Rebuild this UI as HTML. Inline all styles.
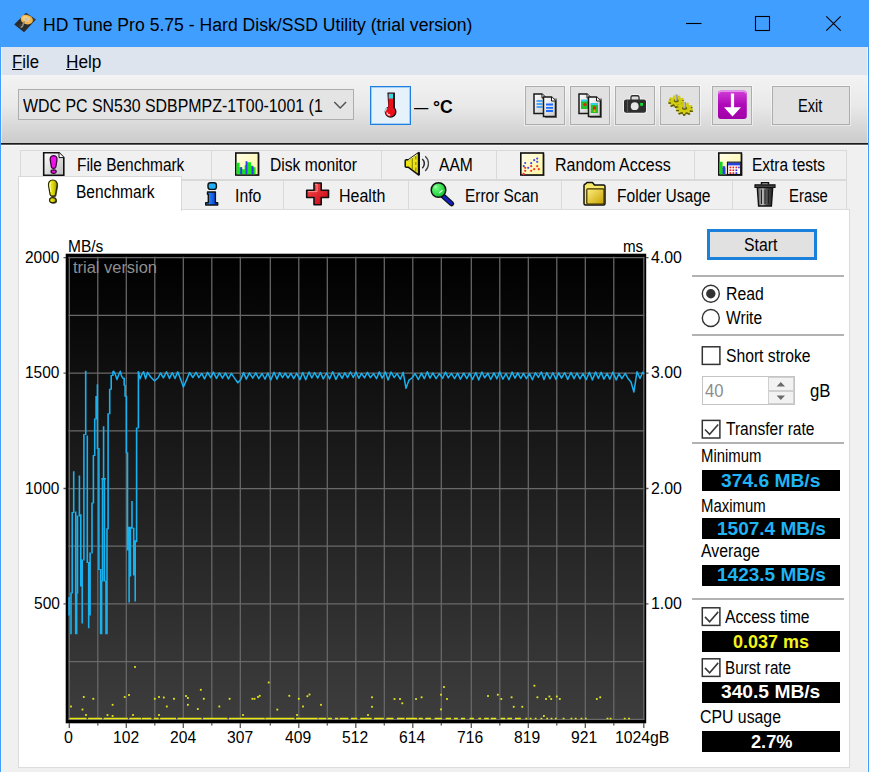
<!DOCTYPE html>
<html><head><meta charset="utf-8"><title>HD Tune Pro 5.75 - Hard Disk/SSD Utility (trial version)</title>
<style>
html,body{margin:0;padding:0}
body{width:869px;height:772px;position:relative;overflow:hidden;background:#f0f0f0;font-family:'Liberation Sans',sans-serif}
.a{position:absolute;box-sizing:border-box}
.t{position:absolute;white-space:pre;line-height:1;font-family:'Liberation Sans',sans-serif;transform-origin:0 0}
.btn{position:absolute;box-sizing:border-box;background:#e1e1e1;border:1px solid #adadad;box-shadow:0 0 0 1px rgba(255,255,255,.45)}
.tab{position:absolute;box-sizing:border-box;background:#f0f0f0;border:1px solid #d9d9d9}
.sep{position:absolute;height:2px;background:#b2b2b2;left:692px;width:152px}
.lcd{position:absolute;left:702px;width:137.6px;background:#000}
.cb{position:absolute;box-sizing:border-box;left:701.5px;width:19px;height:19px;border:1.5px solid #333;background:#fff}
svg{overflow:visible}
</style></head><body>
<!-- title bar -->
<div class="a" style="left:0;top:0;width:869px;height:47px;background:#409efe"></div>
<svg class="a" style="left:0;top:0" width="869" height="47" viewBox="0 0 869 47">
 <polygon points="26,12.8 35.9,19.5 24.1,32.2 14.2,24.6" fill="#2b2b2b"/>
 <polygon points="26,13.6 34.9,19.6 33,21.6 24.2,15.6" fill="#444"/>
 <ellipse cx="26.8" cy="19.6" rx="6.2" ry="4.7" transform="rotate(18 26.8 19.6)" fill="#f0b54c"/>
 <ellipse cx="26.2" cy="18.8" rx="4" ry="2.8" transform="rotate(18 26.2 18.8)" fill="#f7cc78"/>
 <ellipse cx="26.7" cy="19.4" rx="2" ry="1.6" fill="#c9c4c0"/>
 <polygon points="24,21 25,21.4 23,27 21,28.2 20.4,27.2" fill="#8f8b85"/>
 <polygon points="18,25.5 21,23.5 22.5,25 19.5,27.6" fill="#3a3a3a"/>
 <path d="M686 23.5H701.5" stroke="#000" stroke-width="1.1"/>
 <rect x="755.5" y="16.5" width="14" height="14" fill="none" stroke="#000" stroke-width="1.1"/>
 <path d="M826.3 16.3L840.7 30.7M840.7 16.3L826.3 30.7" stroke="#000" stroke-width="1.1"/>
</svg>
<!-- menu bar -->
<div class="a" style="left:0;top:47px;width:869px;height:28px;background:#dde4ee"></div>
<!-- toolbar -->
<div class="a" style="left:0;top:75px;width:869px;height:68px;background:linear-gradient(#f3f3f3,#e9e9e9 45%,#cbcbcb)"></div>
<div class="a" style="left:0;top:145px;width:869px;height:1px;background:#fafafa"></div>
<!-- combo -->
<div class="a" style="left:18px;top:89.3px;width:335.5px;height:30.7px;background:#e4e4e4;border:1.3px solid #adadad"></div>
<svg class="a" style="left:0;top:0" width="869" height="150" viewBox="0 0 869 150"><path d="M334.3 102L340.2 107.9L346.1 102" fill="none" stroke="#505050" stroke-width="1.4"/></svg>
<!-- thermometer button -->
<div class="a" style="left:370px;top:86px;width:41px;height:39px;background:#e5f1fb;border:1px solid #1e7fe0;box-shadow:inset 0 0 0 1px #a4cdf3"></div>
<svg class="a" style="left:0;top:0" width="869" height="150" viewBox="0 0 869 150">
 <path d="M387.400 92.600h7.400v15.200a5.500 5.500 0 0 1 1.700 4 5.800 5.800 0 0 1-11.800 0 5.500 5.500 0 0 1 3.500-5z" fill="#111"/>
 <path d="M388.700 93.600h5.200v14.500a4.800 4.800 0 0 1 1.200 3.700 4.900 4.900 0 0 1-9.900 0 4.600 4.600 0 0 1 3.100-4.300z" fill="#e8101a"/>
 <rect x="388.700" y="93.800" width="4.600" height="4.800" fill="#38d8e0"/>
 <path d="M393.900 93.200v14.900" stroke="#111" stroke-width="1.600"/>
 <path d="M385.400 111.500a4 4 0 0 1 1.600-3.200" stroke="#a0f0f0" stroke-width="1.200" fill="none"/>
 <path d="M387 112.500a3 3 0 0 0 3.200 2.500" stroke="#ffd8d8" stroke-width="1.400" fill="none"/>
</svg>
<!-- toolbar buttons -->
<div class="btn" style="left:525px;top:86.2px;width:40px;height:38.6px"></div>
<div class="btn" style="left:570px;top:86.2px;width:40px;height:38.6px"></div>
<div class="btn" style="left:615px;top:86.2px;width:40px;height:38.6px"></div>
<div class="btn" style="left:660px;top:86.2px;width:40px;height:38.6px"></div>
<div class="btn" style="left:712px;top:86.2px;width:40px;height:38.6px"></div>
<div class="btn" style="left:772px;top:86.2px;width:78px;height:38.6px"></div>
<svg class="a" style="left:0;top:0" width="869" height="150" viewBox="0 0 869 150">
 <defs>
  <linearGradient id="pg" x1="0" y1="0" x2="1" y2="1"><stop offset="0" stop-color="#fff"/><stop offset="1" stop-color="#c8c8c8"/></linearGradient>
  <linearGradient id="pu" x1="0" y1="0" x2="0" y2="1"><stop offset="0" stop-color="#d040d8"/><stop offset=".5" stop-color="#b008b8"/><stop offset="1" stop-color="#a000a8"/></linearGradient>
  <g id="page"><path d="M0 0h8l4 4v15.5h-12z" fill="url(#pg)" stroke="#1a1a1a" stroke-width="1.5"/><path d="M8 0v4h4" fill="#fff" stroke="#1a1a1a" stroke-width="1"/></g>
 </defs>
 <!-- copy text -->
 <g transform="translate(534,94)"><use href="#page"/><path d="M2.5 7h6M2.5 10h6M2.5 13h6" stroke="#1e90ff" stroke-width="1.7"/></g>
 <g transform="translate(543.5,97)"><rect x="1.5" y="1.5" width="12" height="19.5" fill="#222" opacity=".55"/><use href="#page"/><path d="M2.5 7.5h7M2.5 10.8h7M2.5 14h7" stroke="#1e6cff" stroke-width="1.8"/></g>
 <!-- copy image -->
 <g transform="translate(579,94)"><use href="#page"/><rect x="2" y="6" width="7" height="9" fill="#28c028"/><rect x="2" y="5.5" width="7" height="2" fill="#30d0e8"/><circle cx="6" cy="10.5" r="1.6" fill="#e02010"/></g>
 <g transform="translate(588.5,97)"><rect x="1.5" y="1.5" width="12" height="19.5" fill="#222" opacity=".55"/><use href="#page"/><rect x="2.2" y="6.5" width="7.3" height="9.5" fill="#28c028"/><rect x="2.2" y="6" width="7.3" height="2" fill="#30d0e8"/><circle cx="6" cy="11" r="1.7" fill="#e02010"/><path d="M5 15l1-3 1 3z" fill="#e8c020"/></g>
 <!-- camera -->
 <g>
  <path d="M624 101.5a2 2 0 0 1 2-2h4.3v-2.2a2.2 2.2 0 0 1 2.2-2.2h5a2.2 2.2 0 0 1 2.2 2.2v2.2h4.3a2 2 0 0 1 2 2v9.3a2 2 0 0 1-2 2h-18a2 2 0 0 1-2-2z" fill="#2e2e2e" stroke="#fafafa" stroke-width="1.6" paint-order="stroke"/>
  <path d="M631.6 99.5v-1.7a1.2 1.2 0 0 1 1.2-1.2h4.4a1.2 1.2 0 0 1 1.2 1.2v1.7z" fill="#dcdcdc"/>
  <path d="M627.5 100v13" stroke="#555" stroke-width="1.2"/>
  <circle cx="634.7" cy="106.2" r="3.9" fill="#e6e6e6"/>
  <rect x="640.2" y="103" width="2.8" height="2.8" fill="#10e030"/>
 </g>
 <!-- gears -->
 <path d="M6.00 0.00 L8.14 1.03 L7.71 2.80 L5.34 2.74 L4.60 3.86 L5.57 6.02 L4.10 7.10 L2.33 5.53 L1.04 5.91 L0.40 8.19 L-1.42 8.08 L-1.77 5.73 L-3.00 5.20 L-4.96 6.53 L-6.28 5.27 L-5.04 3.25 L-5.64 2.05 L-8.00 1.82 L-8.20 0.00 L-5.95 -0.75 L-5.64 -2.05 L-7.29 -3.75 L-6.28 -5.27 L-4.08 -4.40 L-3.00 -5.20 L-3.18 -7.56 L-1.42 -8.08 L-0.29 -5.99 L1.04 -5.91 L2.42 -7.83 L4.10 -7.10 L3.63 -4.78 L4.60 -3.86 L6.89 -4.44 L7.71 -2.80 L5.85 -1.33Z" transform="translate(676.3,102.6) scale(1,.68)" fill="#5e5a00"/>
 <path d="M6.00 0.00 L8.14 1.03 L7.71 2.80 L5.34 2.74 L4.60 3.86 L5.57 6.02 L4.10 7.10 L2.33 5.53 L1.04 5.91 L0.40 8.19 L-1.42 8.08 L-1.77 5.73 L-3.00 5.20 L-4.96 6.53 L-6.28 5.27 L-5.04 3.25 L-5.64 2.05 L-8.00 1.82 L-8.20 0.00 L-5.95 -0.75 L-5.64 -2.05 L-7.29 -3.75 L-6.28 -5.27 L-4.08 -4.40 L-3.00 -5.20 L-3.18 -7.56 L-1.42 -8.08 L-0.29 -5.99 L1.04 -5.91 L2.42 -7.83 L4.10 -7.10 L3.63 -4.78 L4.60 -3.86 L6.89 -4.44 L7.71 -2.80 L5.85 -1.33Z" transform="translate(676.3,100.8) scale(1,.68)" fill="#d2cc12"/>
 <ellipse cx="676.3" cy="100.8" rx="2.6" ry="1.7" fill="#6a6600"/>
 <path d="M676.4 94.6v6.4" stroke="#8c8c8c" stroke-width="2.4"/><path d="M675.8 94.8v6" stroke="#e0e0e0" stroke-width=".9"/>
 <path d="M6.00 0.00 L8.14 1.03 L7.71 2.80 L5.34 2.74 L4.60 3.86 L5.57 6.02 L4.10 7.10 L2.33 5.53 L1.04 5.91 L0.40 8.19 L-1.42 8.08 L-1.77 5.73 L-3.00 5.20 L-4.96 6.53 L-6.28 5.27 L-5.04 3.25 L-5.64 2.05 L-8.00 1.82 L-8.20 0.00 L-5.95 -0.75 L-5.64 -2.05 L-7.29 -3.75 L-6.28 -5.27 L-4.08 -4.40 L-3.00 -5.20 L-3.18 -7.56 L-1.42 -8.08 L-0.29 -5.99 L1.04 -5.91 L2.42 -7.83 L4.10 -7.10 L3.63 -4.78 L4.60 -3.86 L6.89 -4.44 L7.71 -2.80 L5.85 -1.33Z" transform="translate(684.6,110) scale(1.06,.72)" fill="#5e5a00"/>
 <path d="M6.00 0.00 L8.14 1.03 L7.71 2.80 L5.34 2.74 L4.60 3.86 L5.57 6.02 L4.10 7.10 L2.33 5.53 L1.04 5.91 L0.40 8.19 L-1.42 8.08 L-1.77 5.73 L-3.00 5.20 L-4.96 6.53 L-6.28 5.27 L-5.04 3.25 L-5.64 2.05 L-8.00 1.82 L-8.20 0.00 L-5.95 -0.75 L-5.64 -2.05 L-7.29 -3.75 L-6.28 -5.27 L-4.08 -4.40 L-3.00 -5.20 L-3.18 -7.56 L-1.42 -8.08 L-0.29 -5.99 L1.04 -5.91 L2.42 -7.83 L4.10 -7.10 L3.63 -4.78 L4.60 -3.86 L6.89 -4.44 L7.71 -2.80 L5.85 -1.33Z" transform="translate(684.6,108.2) scale(1.06,.72)" fill="#d2cc12"/>
 <ellipse cx="684.6" cy="108.2" rx="2.7" ry="1.8" fill="#6a6600"/>
 <path d="M684.7 102v6.400" stroke="#8c8c8c" stroke-width="2.400"/><path d="M684.100 102.200v6" stroke="#e0e0e0" stroke-width=".9"/>
 <!-- purple arrow -->
 <rect x="718" y="90.5" width="28.8" height="28.4" rx="3" fill="url(#pu)"/>
 <path d="M718.8 93.5a2.3 2.3 0 0 1 2.3-2.2h22.6a2.3 2.3 0 0 1 2.3 2.2" fill="none" stroke="#e890ee" stroke-width="1.2"/>
 <path d="M730.900 93.500h3.200v13.700h6.900l-8.500 9.300-8.500-9.300h6.900z" fill="#fff"/>
</svg>
<!-- tab control -->
<div class="tab" style="left:19.8px;top:149.6px;width:192px;height:30.5px"></div>
<div class="tab" style="left:210.8px;top:149.6px;width:171px;height:30.5px"></div>
<div class="tab" style="left:380.8px;top:149.6px;width:116px;height:30.5px"></div>
<div class="tab" style="left:495.8px;top:149.6px;width:199px;height:30.5px"></div>
<div class="tab" style="left:693.8px;top:149.6px;width:153px;height:30.5px"></div>
<div class="tab" style="left:179.3px;top:179.6px;width:104.5px;height:30.5px"></div>
<div class="tab" style="left:282.8px;top:179.6px;width:126px;height:30.5px"></div>
<div class="tab" style="left:407.8px;top:179.6px;width:154px;height:30.5px"></div>
<div class="tab" style="left:560.8px;top:179.6px;width:172px;height:30.5px"></div>
<div class="tab" style="left:731.8px;top:179.6px;width:115px;height:30.5px"></div>
<!-- tab page -->
<div class="a" style="left:18px;top:209.2px;width:831.5px;height:559px;background:#fff;border:1px solid #dcdcdc"></div>
<!-- selected tab -->
<div class="a" style="left:18px;top:176.4px;width:164.3px;height:34.5px;background:#fff;border:1px solid #d9d9d9;border-bottom:none"></div>
<svg class="a" style="left:0;top:0" width="869" height="215" viewBox="0 0 869 215">
 <defs>
  <linearGradient id="ly" x1="0" y1="0" x2="1" y2="1"><stop offset="0" stop-color="#ffffe8"/><stop offset="1" stop-color="#fff6a0"/></linearGradient>
  <linearGradient id="lg" x1="0" y1="0" x2="1" y2="1"><stop offset="0" stop-color="#fff"/><stop offset="1" stop-color="#bdbdbd"/></linearGradient>
  <linearGradient id="lr" x1="0" y1="0" x2="1" y2="1"><stop offset="0" stop-color="#f85050"/><stop offset="1" stop-color="#c80010"/></linearGradient>
  <linearGradient id="lb" x1="0" y1="0" x2="1" y2="0"><stop offset="0" stop-color="#30a0ff"/><stop offset="1" stop-color="#0030d0"/></linearGradient>
  <linearGradient id="lf" x1="0" y1="0" x2="1" y2="1"><stop offset="0" stop-color="#fff080"/><stop offset="1" stop-color="#c8a000"/></linearGradient>
  <linearGradient id="lt" x1="0" y1="0" x2="1" y2="0"><stop offset="0" stop-color="#555"/><stop offset=".35" stop-color="#c0c0c0"/><stop offset=".6" stop-color="#555"/><stop offset="1" stop-color="#222"/></linearGradient>
  <linearGradient id="lyy" x1="0" y1="0" x2="1" y2="0"><stop offset="0" stop-color="#f4f018"/><stop offset=".55" stop-color="#dcd808"/><stop offset="1" stop-color="#989400"/></linearGradient>
  <radialGradient id="lgn" cx=".35" cy=".35" r=".7"><stop offset="0" stop-color="#70ff80"/><stop offset="1" stop-color="#10c030"/></radialGradient>
 </defs>
 <!-- File Benchmark: page + magenta ! -->
 <path d="M43.7 152.8h15.3l4.8 4.8v17.6h-20.1z" fill="url(#lg)" stroke="#111" stroke-width="1.6"/>
 <path d="M59 152.8v4.8h4.8" fill="#fff" stroke="#111" stroke-width="1"/>
 <path d="M53.6 155.6c2.6 0 3.6 2 3.4 4.2l-1.2 7.4c-.3 1.6-4.1 1.6-4.4 0l-1.2-7.4c-.2-2.2.8-4.2 3.4-4.2z" fill="#f010e8" stroke="#300030" stroke-width="1.200"/>
 <ellipse cx="53.6" cy="171.6" rx="2.6" ry="1.8" fill="#f010e8" stroke="#300030" stroke-width="1.200"/>
 <!-- Disk monitor -->
 <rect x="237" y="154" width="22.5" height="22" fill="#222" opacity=".5"/>
 <rect x="235.8" y="153" width="22.6" height="22" fill="url(#ly)" stroke="#111" stroke-width="1.6"/>
 <path d="M236.6 174.2v-11.5h3v4.5h2.5v2h2.5v-4h2v-3h4.5v3.5h2v1.5h2.5v7z" fill="#10e818"/>
 <path d="M240.2 174.2v-7h2v7zM245.6 174.2v-13h1.8v13zM251.6 174.2v-8h2v8z" fill="#3838f0"/>
 <!-- AAM speaker -->
 <path d="M405.200 160.800a1 1 0 0 1 1-1h2.300l10.300-7.300v22.600l-10.300-7.800h-2.300a1 1 0 0 1-1-1z" fill="#ece414" stroke="#111" stroke-width="1.500" stroke-linejoin="round"/>
 <path d="M418.900 152.500v22.600" stroke="#111" stroke-width="2.200"/>
 <path d="M412.300 158v11M415.800 155.500v4M415.800 162v3M415.800 167.500v4" stroke="#8a8400" stroke-width="1.100"/>
 <path d="M408.300 160.500l9-6.300" stroke="#ffffa0" stroke-width="1"/>
 <path d="M422.300 159a6.200 6.200 0 0 1 0 9.200" fill="none" stroke="#222" stroke-width="1.500"/>
 <path d="M425.200 156.300a9.800 9.800 0 0 1 0 14.600" fill="none" stroke="#444" stroke-width="1.300"/>
 <!-- Random access -->
 <rect x="522" y="154" width="22.5" height="22" fill="#222" opacity=".5"/>
 <rect x="520.8" y="153" width="22.6" height="22" fill="url(#ly)" stroke="#111" stroke-width="1.6"/>
 <g fill="#4848f8"><circle cx="525.2" cy="163" r="1.1"/><circle cx="523.8" cy="166.2" r="1.1"/><circle cx="528.2" cy="167.8" r="1.1"/><circle cx="531.2" cy="163.2" r="1.1"/><circle cx="534.2" cy="160.2" r="1.1"/><circle cx="537.2" cy="158.6" r="1.1"/><circle cx="537.2" cy="161.8" r="1.1"/></g>
 <g fill="#f83030"><circle cx="523.6" cy="174" r="1.2"/><circle cx="525.2" cy="170.8" r="1.1"/><circle cx="525.2" cy="167.8" r="1.1"/><circle cx="531.2" cy="170.8" r="1.1"/><circle cx="531.2" cy="166.2" r="1.1"/><circle cx="534.2" cy="169.2" r="1.1"/><circle cx="537.2" cy="166.2" r="1.1"/><circle cx="538.8" cy="169.2" r="1.1"/></g>
 <!-- Extra tests -->
 <rect x="720" y="154" width="22.5" height="22" fill="#222" opacity=".5"/>
 <rect x="718.8" y="153" width="22.6" height="22" fill="url(#ly)" stroke="#111" stroke-width="1.6"/>
 <path d="M719.6 174.2v-12.5h3v6h3v6.5z" fill="#10d818"/><path d="M722.6 174.2v-8h2.6v8z" fill="#3838f0"/>
 <rect x="727.5" y="162.2" width="13.2" height="12.3" fill="#fff" stroke="#111" stroke-width="1.2"/>
 <rect x="728.1" y="162.8" width="12" height="2.6" fill="#2840e0"/>
 <g fill="#f02020"><rect x="729.5" y="166.6" width="1.7" height="1.7"/><rect x="732.5" y="166.6" width="1.7" height="1.7"/><rect x="735.5" y="166.6" width="1.7" height="1.7"/><rect x="729.5" y="169.4" width="1.7" height="1.7"/><rect x="732.5" y="169.4" width="1.7" height="1.7"/><rect x="729.5" y="172.2" width="1.7" height="1.7"/><rect x="732.5" y="172.2" width="1.7" height="1.7"/></g>
 <g fill="#2030f0"><rect x="735.5" y="169.4" width="1.7" height="1.7"/><rect x="735.5" y="172.2" width="1.7" height="1.7"/><rect x="738.2" y="166.6" width="1.5" height="1.7"/></g>
 <!-- Benchmark yellow ! -->
 <path d="M53.600 180.800c3.400 0 4.800 2.500 4.500 5.600l-1.700 9.400c-.4 2.100-5.200 2.100-5.600 0l-1.700-9.400c-.3-3.100 1.100-5.600 4.500-5.600z" fill="#222" opacity=".75"/>
 <ellipse cx="53.600" cy="201" rx="3.500" ry="2.700" fill="#222" opacity=".75"/>
 <path d="M52.800 180c3.200 0 4.600 2.400 4.300 5.400l-1.600 9.200c-.4 2-5 2-5.400 0l-1.600-9.200c-.3-3 1.100-5.400 4.300-5.400z" fill="url(#lyy)" stroke="#2a2800" stroke-width="1.200"/>
 <path d="M51.300 182.300c-1.200.8-1.500 2-1.300 3.500l1 6" fill="none" stroke="#ffffa0" stroke-width="1.100"/>
 <ellipse cx="52.800" cy="200.200" rx="3.300" ry="2.500" fill="url(#lyy)" stroke="#2a2800" stroke-width="1.200"/>
 <!-- Info i -->
 <rect x="208" y="182.800" width="8.400" height="6.600" rx="2.400" fill="#20b0f8" stroke="#111" stroke-width="1.400"/>
 <path d="M207.5 192h7.900v10.700h2.300v2.300h-12v-2.300h2.600v-8.400h-0.800z" fill="url(#lb)" stroke="#111" stroke-width="1.400" stroke-linejoin="round"/>
 <!-- Health cross -->
 <path d="M314 183h7.200v7.300h7.300v7.200h-7.300v7.300h-7.200v-7.300h-7.300v-7.200h7.300z" fill="url(#lr)" stroke="#111" stroke-width="1.600" stroke-linejoin="round"/>
 <path d="M315 184.300h2v7.300h-9" fill="none" stroke="#ff9090" stroke-width="1"/>
 <!-- Error scan magnifier -->
 <path d="M442.500 195.500l9 8.200" stroke="#111" stroke-width="5.200" stroke-linecap="round"/>
 <path d="M443 196l8.300 7.500" stroke="#1020c8" stroke-width="3" stroke-linecap="round"/>
 <circle cx="438.500" cy="190" r="7.300" fill="url(#lgn)" stroke="#111" stroke-width="1.500"/>
 <path d="M434.500 187.500l2-1.500M439 193l3.500-2.800" stroke="#d8ffd8" stroke-width="1.100"/>
 <!-- Folder -->
 <path d="M584 185.500a1.500 1.500 0 0 1 1.500-1.500l1.500-1.500h5.500l2 2.500h9a1.500 1.500 0 0 1 1.500 1.500v17a1.500 1.500 0 0 1-1.500 1.500h-18a1.500 1.500 0 0 1-1.500-1.500z" fill="#f8e868" stroke="#111" stroke-width="1.500" stroke-linejoin="round"/>
 <rect x="586.800" y="188.800" width="17.200" height="15.200" rx="1" fill="url(#lf)" stroke="#3a3000" stroke-width="1.200"/>
 <!-- Erase trash -->
 <path d="M757.300 187.500h15.400l-1.300 18.500h-12.800z" fill="url(#lt)" stroke="#111" stroke-width="1.400"/>
 <path d="M761.500 189.500v14.500M765 189.500v14.500M768.500 189.500v14.500" stroke="#222" stroke-width="1.100"/>
 <path d="M755 184.800h20v2.700h-20z" fill="#444" stroke="#111" stroke-width="1.200"/>
 <path d="M761.500 184.500v-1.700h7v1.700" fill="none" stroke="#111" stroke-width="1.500"/>
</svg>
<svg id="chart" style="position:absolute;left:0;top:0" width="869" height="772" viewBox="0 0 869 772">
<defs><linearGradient id="cg" x1="0" y1="0" x2="0" y2="1"><stop offset="0" stop-color="#000"/><stop offset="1" stop-color="#3d3d3d"/></linearGradient></defs>
<rect x="65.7" y="253.7" width="580.5" height="469.59999999999997" fill="#000"/>
<rect x="68.3" y="256.7" width="576.0" height="463.09999999999997" fill="url(#cg)"/>
<path d="M69.30 256.7 V720.0999999999999 M97.80 256.7 V720.0999999999999 M126.30 256.7 V720.0999999999999 M154.80 256.7 V720.0999999999999 M183.30 256.7 V720.0999999999999 M211.80 256.7 V720.0999999999999 M240.30 256.7 V720.0999999999999 M270.30 256.7 V720.0999999999999 M298.80 256.7 V720.0999999999999 M327.30 256.7 V720.0999999999999 M355.80 256.7 V720.0999999999999 M384.30 256.7 V720.0999999999999 M412.80 256.7 V720.0999999999999 M441.30 256.7 V720.0999999999999 M471.30 256.7 V720.0999999999999 M499.80 256.7 V720.0999999999999 M528.30 256.7 V720.0999999999999 M556.80 256.7 V720.0999999999999 M585.30 256.7 V720.0999999999999 M613.80 256.7 V720.0999999999999 M643.80 256.7 V720.0999999999999 M68.3 257.70 H644.5999999999999 M68.3 315.40 H644.5999999999999 M68.3 373.10 H644.5999999999999 M68.3 430.80 H644.5999999999999 M68.3 488.50 H644.5999999999999 M68.3 546.20 H644.5999999999999 M68.3 603.90 H644.5999999999999 M68.3 661.60 H644.5999999999999 M68.3 719.30 H644.5999999999999" stroke="#696969" stroke-width="1.25" fill="none"/>
<path d="M63.5 257.70 H66 M646 257.70 H648.5 M63.5 373.10 H66 M646 373.10 H648.5 M63.5 488.50 H66 M646 488.50 H648.5 M63.5 603.90 H66 M646 603.90 H648.5 M69.30 723 V728 M97.80 723 V725.5 M126.30 723 V728 M154.80 723 V725.5 M183.30 723 V728 M211.80 723 V725.5 M240.30 723 V728 M270.30 723 V725.5 M298.80 723 V728 M327.30 723 V725.5 M355.80 723 V728 M384.30 723 V725.5 M412.80 723 V728 M441.30 723 V725.5 M471.30 723 V728 M499.80 723 V725.5 M528.30 723 V728 M556.80 723 V725.5 M585.30 723 V728 M613.80 723 V725.5 M643.80 723 V728" stroke="#555" stroke-width="1.3" fill="none"/>
<path d="M69.1 597.0V615.5 M71.0 592.5V634.2 M72.2 511.9V593.5 M73.7 471.2V512.9 M75.7 511.5V634.2 M76.7 592.5V634.2 M77.5 515.5V593.5 M79.4 475.5V516.5 M80.8 514.3V586.5 M82.2 559.5V623.5 M83.9 434.0V560.5 M85.7 370.7V435.0 M87.3 435.5V563.1 M88.7 562.1V628.3 M90.1 552.5V615.5 M92.0 502.5V553.5 M93.4 455.0V503.5 M94.7 418.5V456.0 M96.1 396.0V419.5 M97.4 384.3V449.0 M98.9 448.0V570.1 M100.6 569.1V634.2 M101.6 580.5V634.2 M102.5 479.3V581.5 M103.6 426.3V480.3 M104.4 479.3V581.5 M106.0 580.5V634.2 M107.0 528.3V634.2 M108.1 413.3V529.3 M109.7 388.7V414.3 M111.2 375.1V389.7 M112.9 371.2V376.1 M124.2 377.7V385.8 M125.1 384.8V396.8 M126.4 395.8V453.2 M127.5 452.2V550.5 M129.1 526.8V602.4 M130.4 526.8V576.5 M132.0 500.9V528.8 M133.7 527.8V575.5 M135.2 540.3V601.4 M136.6 427.5V542.3 M138.4 371.2V428.5 M101.3 478.8H106" fill="none" stroke="#19b0ee" stroke-width="1.6"/>
<polyline points="112.9,371.7 113.8,371.3 115.5,375.0 117.0,379.5 118.6,375.0 120.3,371.3 121.6,376.2 122.9,378.2 124.2,378.6" fill="none" stroke="#19b0ee" stroke-width="1.5" stroke-linejoin="round"/>
<polyline points="138.4,371.7 140.1,378.8 141.9,374.3 143.6,371.7 145.6,378.8 147.6,372.3 150.7,377.0 154.4,380.8 158.0,378.0 160.5,373.0 163.4,377.8 166.5,371.8 169.5,378.4 172.2,372.7 175.0,378.5 177.7,371.9 180.7,379.5 183.4,387.0 186.5,379.9 189.6,372.5 192.8,377.5 196.1,372.3 198.8,377.7 201.7,373.3 204.5,378.9 207.6,372.4 210.7,377.6 213.4,372.1 216.5,378.5 219.4,372.8 222.4,378.2 225.5,373.0 228.4,378.9 231.4,373.4 234.5,378.1 237.8,382.8 240.8,379.4 243.6,372.6 246.3,379.1 249.4,372.8 252.7,378.2 255.8,372.8 258.8,378.6 262.0,373.5 265.0,379.1 267.8,373.0 270.8,380.0 274.0,372.2 277.0,379.1 279.7,372.6 282.5,377.7 285.2,373.2 288.0,378.0 290.9,373.4 293.7,378.6 296.7,373.4 299.9,379.6 302.8,372.5 305.7,379.7 309.0,372.0 311.8,378.0 314.6,372.6 317.7,378.1 320.4,372.5 323.3,378.9 326.6,373.0 329.6,379.0 332.7,371.8 335.9,379.4 339.1,373.2 342.1,378.4 344.8,372.9 347.6,377.6 350.4,372.0 353.3,377.5 356.0,372.0 358.8,378.3 361.5,373.4 364.5,377.8 367.4,372.4 370.3,377.7 373.5,373.6 376.5,378.7 379.3,371.9 382.2,378.1 385.4,372.0 388.1,379.9 391.1,372.0 394.1,377.5 397.1,373.6 400.3,379.2 403.2,372.4 406.0,388.3 409.0,380.1 411.9,378.0 415.1,373.6 418.3,379.5 421.5,373.1 424.3,378.7 427.3,371.8 430.0,378.1 432.8,373.0 436.1,378.6 439.4,373.6 442.6,378.3 445.5,372.1 448.3,377.9 451.4,373.4 454.6,378.6 457.7,373.2 460.4,379.1 463.7,373.2 466.8,378.6 469.6,373.2 472.5,379.5 475.8,372.5 478.7,379.9 481.9,372.0 484.7,377.8 487.9,373.2 490.7,379.5 494.0,372.9 496.9,378.8 499.7,371.7 502.9,379.1 506.0,373.5 508.9,379.7 512.1,372.1 515.0,378.2 517.8,372.8 520.7,378.5 523.4,373.4 526.4,378.6 529.4,373.4 532.4,379.8 535.4,372.7 538.4,377.4 541.3,372.0 544.0,379.5 546.8,372.6 550.0,378.8 552.9,372.7 555.9,379.4 558.7,372.8 561.5,378.1 564.7,372.7 567.7,379.4 571.0,372.5 574.0,378.7 577.0,373.0 580.0,378.8 583.0,373.5 586.1,379.7 589.4,372.2 592.4,379.9 595.6,372.0 598.4,378.5 601.1,372.2 603.9,379.1 607.1,373.4 609.8,379.3 612.9,372.0 616.2,379.9 619.0,373.5 621.9,378.7 625.2,373.3 628.0,378.5 631.0,382.0 633.9,392.0 637.0,371.7 640.0,378.5 642.7,372.3 644.0,374.0" fill="none" stroke="#19b0ee" stroke-width="1.5" stroke-linejoin="round"/>
<g fill="#e6e61e"><rect x="70.1" y="705.6" width="1.8" height="1.8"/><rect x="82.9" y="696.1" width="1.8" height="1.8"/><rect x="81.6" y="708.6" width="1.8" height="1.8"/><rect x="92.4" y="697.9" width="1.8" height="1.8"/><rect x="111.7" y="703.9" width="1.8" height="1.8"/><rect x="123.8" y="696.1" width="1.8" height="1.8"/><rect x="128.1" y="694.1" width="1.8" height="1.8"/><rect x="134.1" y="666.1" width="1.8" height="1.8"/><rect x="153.9" y="697.9" width="1.8" height="1.8"/><rect x="158.1" y="696.1" width="1.8" height="1.8"/><rect x="162.9" y="696.6" width="1.8" height="1.8"/><rect x="165.9" y="705.6" width="1.8" height="1.8"/><rect x="173.1" y="697.9" width="1.8" height="1.8"/><rect x="185.1" y="695.1" width="1.8" height="1.8"/><rect x="187.0" y="697.1" width="1.8" height="1.8"/><rect x="187.0" y="703.9" width="1.8" height="1.8"/><rect x="196.9" y="708.1" width="1.8" height="1.8"/><rect x="199.9" y="688.9" width="1.8" height="1.8"/><rect x="202.9" y="697.9" width="1.8" height="1.8"/><rect x="218.4" y="705.6" width="1.8" height="1.8"/><rect x="228.7" y="697.9" width="1.8" height="1.8"/><rect x="251.5" y="697.9" width="1.8" height="1.8"/><rect x="253.6" y="697.9" width="1.8" height="1.8"/><rect x="257.1" y="696.1" width="1.8" height="1.8"/><rect x="258.8" y="694.9" width="1.8" height="1.8"/><rect x="267.8" y="681.6" width="1.8" height="1.8"/><rect x="276.4" y="708.7" width="1.8" height="1.8"/><rect x="288.4" y="694.9" width="1.8" height="1.8"/><rect x="297.9" y="697.9" width="1.8" height="1.8"/><rect x="302.1" y="705.6" width="1.8" height="1.8"/><rect x="306.5" y="695.3" width="1.8" height="1.8"/><rect x="308.6" y="693.6" width="1.8" height="1.8"/><rect x="320.1" y="703.9" width="1.8" height="1.8"/><rect x="371.1" y="696.4" width="1.8" height="1.8"/><rect x="371.1" y="705.9" width="1.8" height="1.8"/><rect x="367.1" y="714.1" width="1.8" height="1.8"/><rect x="393.6" y="698.1" width="1.8" height="1.8"/><rect x="399.1" y="698.1" width="1.8" height="1.8"/><rect x="401.4" y="702.4" width="1.8" height="1.8"/><rect x="415.1" y="698.1" width="1.8" height="1.8"/><rect x="420.7" y="696.4" width="1.8" height="1.8"/><rect x="440.1" y="693.8" width="1.8" height="1.8"/><rect x="443.1" y="686.1" width="1.8" height="1.8"/><rect x="446.1" y="698.1" width="1.8" height="1.8"/><rect x="440.1" y="708.5" width="1.8" height="1.8"/><rect x="487.1" y="695.1" width="1.8" height="1.8"/><rect x="496.9" y="693.8" width="1.8" height="1.8"/><rect x="500.4" y="698.1" width="1.8" height="1.8"/><rect x="510.7" y="696.4" width="1.8" height="1.8"/><rect x="512.8" y="705.9" width="1.8" height="1.8"/><rect x="521.4" y="705.9" width="1.8" height="1.8"/><rect x="533.5" y="684.8" width="1.8" height="1.8"/><rect x="536.5" y="696.4" width="1.8" height="1.8"/><rect x="545.1" y="698.1" width="1.8" height="1.8"/><rect x="548.5" y="695.6" width="1.8" height="1.8"/><rect x="550.3" y="698.1" width="1.8" height="1.8"/><rect x="555.9" y="695.6" width="1.8" height="1.8"/><rect x="558.9" y="698.1" width="1.8" height="1.8"/><rect x="595.9" y="698.1" width="1.8" height="1.8"/><rect x="599.3" y="696.4" width="1.8" height="1.8"/><rect x="85.1" y="714.1" width="1.8" height="1.8"/><rect x="106.6" y="714.1" width="1.8" height="1.8"/><rect x="111.7" y="715.1" width="1.8" height="1.8"/><rect x="132.1" y="714.1" width="1.8" height="1.8"/><rect x="158.1" y="714.1" width="1.8" height="1.8"/><rect x="242.1" y="714.1" width="1.8" height="1.8"/><rect x="296.1" y="714.1" width="1.8" height="1.8"/><rect x="543.0" y="715.1" width="1.8" height="1.8"/></g>
<path d="M69.5 718.5H86.6 M88.1 718.5H102.1 M103.6 718.5H127.8 M129.3 718.5H141.2 M142.0 718.5H151.4 M153.9 718.5H158.7 M160.2 718.5H176.0 M177.5 718.5H201.6 M203.1 718.5H227.4 M228.9 718.5H264.7 M265.5 718.5H294.5 M296.0 718.5H317.7 M318.5 718.5H326.2 M327.7 718.5H331.9 M334.9 718.5H338.2 M339.7 718.5H348.4 M350.9 718.5H357.2 M360.2 718.5H371.6 M374.1 718.5H383.8 M386.3 718.5H393.5 M397.0 718.5H404.5 M406.0 718.5H417.1 M418.6 718.5H422.8 M425.3 718.5H431.1 M434.6 718.5H442.1 M445.6 718.5H451.0 M454.0 718.5H457.9 M460.9 718.5H465.1 M469.6 718.5H473.9 M478.4 718.5H481.1 M484.1 718.5H488.8 M490.8 718.5H496.2 M500.7 718.5H505.3 M507.3 718.5H512.0 M515.0 718.5H520.9 M525.4 718.5H527.2 M529.7 718.5H531.5 M534.7 718.5H536.5 M540.5 718.5H542.3 M546.3 718.5H548.1 M550.6 718.5H552.4 M554.9 718.5H556.7 M562.7 718.5H564.5 M570.5 718.5H572.3 M574.8 718.5H576.6 M580.6 718.5H582.4 M584.9 718.5H586.7 M606.6 718.5h1.8 M609.7 718.5h1.8 M623.8 718.5h1.8 M628.1 718.5h1.8" stroke="#eaea10" stroke-width="1.7" fill="none"/>
</svg>
<!-- right panel -->
<div class="a" style="left:707px;top:229px;width:110px;height:31px;background:#e1e1e1;border:3px solid #1a80da"></div>
<div class="sep" style="top:275px"></div>
<div class="sep" style="top:334px"></div>
<div class="sep" style="top:442px"></div>
<div class="sep" style="top:598px"></div>
<svg class="a" style="left:0;top:0" width="869" height="772" viewBox="0 0 869 772">
 <circle cx="710.8" cy="293.8" r="8.5" fill="#fff" stroke="#333" stroke-width="1.4"/>
 <circle cx="710.8" cy="293.8" r="4.7" fill="#333"/>
 <circle cx="710.8" cy="318" r="8.5" fill="#fff" stroke="#333" stroke-width="1.4"/>
</svg>
<svg class="a" style="left:0;top:0" width="869" height="772" viewBox="0 0 869 772">
 <g fill="#fff" stroke="#333" stroke-width="1.500"><rect x="702.300" y="346.800" width="17.600" height="17.600"/><rect x="702.300" y="420.400" width="17.600" height="17.600"/><rect x="702.300" y="607.800" width="17.600" height="17.600"/><rect x="702.300" y="658.800" width="17.600" height="17.600"/></g>
 <path d="M705 429.500l4.600 4.800 8.600-9.800M705 616.900l4.600 4.800 8.600-9.800M705 667.900l4.600 4.800 8.600-9.800" fill="none" stroke="#3a3a3a" stroke-width="1.600"/>
</svg>
<!-- spin box -->
<div class="a" style="left:701.5px;top:376.3px;width:93.3px;height:29.2px;background:#fff;border:1.3px solid #c4c4c4"></div>
<div class="a" style="left:768px;top:377.3px;width:25.8px;height:13.6px;background:#f2f2f2;border:1px solid #d0d0d0"></div>
<div class="a" style="left:768px;top:390.9px;width:25.8px;height:13.6px;background:#f2f2f2;border:1px solid #d0d0d0"></div>
<svg class="a" style="left:0;top:0" width="869" height="772" viewBox="0 0 869 772">
 <path d="M776.6 386.6l4.2-4.6 4.2 4.6z" fill="#6a6a6a"/><path d="M776.6 395.4l4.2 4.6 4.2-4.6z" fill="#6a6a6a"/>
</svg>
<!-- lcd boxes -->
<div class="lcd" style="top:470px;height:21.2px"></div>
<div class="lcd" style="top:518px;height:21.2px"></div>
<div class="lcd" style="top:564.8px;height:21.2px"></div>
<div class="lcd" style="top:630.5px;height:21.2px"></div>
<div class="lcd" style="top:681.5px;height:21.2px"></div>
<div class="lcd" style="top:730.8px;height:21.2px"></div>
<span class="t" style="left:42.6px;top:15.5px;font-size:18px;transform:scaleX(0.978);">HD Tune Pro 5.75 - Hard Disk/SSD Utility (trial version)</span>
<span class="t" style="left:11.6px;top:52.7px;font-size:18px;transform:scaleX(0.931);"><u>F</u>ile</span>
<span class="t" style="left:65.6px;top:52.7px;font-size:18px;transform:scaleX(0.956);"><u>H</u>elp</span>
<span class="t" style="left:23.0px;top:96.7px;font-size:18.5px;transform:scaleX(0.860);">WDC PC SN530 SDBPMPZ-1T00-1001 (1</span>
<span class="t" style="left:414.2px;top:98.7px;font-size:17.5px;transform:scaleX(1.469);">–</span>
<span class="t" style="left:433.2px;top:99.4px;font-size:17.5px;font-weight:bold;transform:scaleX(1.008);">°C</span>
<span class="t" style="left:797.6px;top:97.6px;font-size:17.5px;transform:scaleX(0.836);">Exit</span>
<span class="t" style="left:77.0px;top:157.1px;font-size:17.5px;transform:scaleX(0.883);">File Benchmark</span>
<span class="t" style="left:269.7px;top:157.1px;font-size:17.5px;transform:scaleX(0.893);">Disk monitor</span>
<span class="t" style="left:438.7px;top:157.1px;font-size:17.5px;transform:scaleX(0.894);">AAM</span>
<span class="t" style="left:554.8px;top:157.1px;font-size:17.5px;transform:scaleX(0.915);">Random Access</span>
<span class="t" style="left:752.2px;top:157.1px;font-size:17.5px;transform:scaleX(0.883);">Extra tests</span>
<span class="t" style="left:75.8px;top:184.4px;font-size:17.5px;transform:scaleX(0.888);">Benchmark</span>
<span class="t" style="left:234.7px;top:187.6px;font-size:17.5px;transform:scaleX(0.901);">Info</span>
<span class="t" style="left:339.2px;top:187.6px;font-size:17.5px;transform:scaleX(0.915);">Health</span>
<span class="t" style="left:464.6px;top:187.6px;font-size:17.5px;transform:scaleX(0.881);">Error Scan</span>
<span class="t" style="left:617.2px;top:187.6px;font-size:17.5px;transform:scaleX(0.890);">Folder Usage</span>
<span class="t" style="left:788.5px;top:187.6px;font-size:17.5px;transform:scaleX(0.851);">Erase</span>
<span class="t" style="left:68.4px;top:238.7px;font-size:16px;transform:scaleX(0.971);">MB/s</span>
<span class="t" style="left:622.6px;top:238.7px;font-size:16px;transform:scaleX(0.947);">ms</span>
<span class="t" style="left:72.6px;top:259.6px;font-size:16px;color:#8e8e8e;transform:scaleX(1.027);">trial version</span>
<span class="t" style="left:25.2px;top:249.7px;font-size:16px;transform:scaleX(0.966);">2000</span>
<span class="t" style="left:25.2px;top:365.2px;font-size:16px;transform:scaleX(0.966);">1500</span>
<span class="t" style="left:25.2px;top:480.7px;font-size:16px;transform:scaleX(0.966);">1000</span>
<span class="t" style="left:33.7px;top:596.2px;font-size:16px;transform:scaleX(0.970);">500</span>
<span class="t" style="left:650.6px;top:249.7px;font-size:16px;transform:scaleX(0.992);">4.00</span>
<span class="t" style="left:650.6px;top:365.2px;font-size:16px;transform:scaleX(0.992);">3.00</span>
<span class="t" style="left:650.6px;top:480.7px;font-size:16px;transform:scaleX(0.992);">2.00</span>
<span class="t" style="left:650.6px;top:596.2px;font-size:16px;transform:scaleX(0.992);">1.00</span>
<span class="t" style="left:64.0px;top:729.6px;font-size:16px;transform:scaleX(0.999);">0</span>
<span class="t" style="left:112.5px;top:729.6px;font-size:16px;transform:scaleX(0.977);">102</span>
<span class="t" style="left:169.5px;top:729.6px;font-size:16px;transform:scaleX(0.977);">204</span>
<span class="t" style="left:226.5px;top:729.6px;font-size:16px;transform:scaleX(0.977);">307</span>
<span class="t" style="left:284.9px;top:729.6px;font-size:16px;transform:scaleX(0.977);">409</span>
<span class="t" style="left:341.9px;top:729.6px;font-size:16px;transform:scaleX(0.977);">512</span>
<span class="t" style="left:398.9px;top:729.6px;font-size:16px;transform:scaleX(0.977);">614</span>
<span class="t" style="left:457.4px;top:729.6px;font-size:16px;transform:scaleX(0.977);">716</span>
<span class="t" style="left:514.4px;top:729.6px;font-size:16px;transform:scaleX(0.977);">819</span>
<span class="t" style="left:571.4px;top:729.6px;font-size:16px;transform:scaleX(0.977);">921</span>
<span class="t" style="left:615.2px;top:729.6px;font-size:16px;transform:scaleX(0.986);">1024gB</span>
<span class="t" style="left:744.2px;top:236.6px;font-size:17.5px;transform:scaleX(0.901);">Start</span>
<span class="t" style="left:725.5px;top:285.8px;font-size:17.5px;transform:scaleX(0.903);">Read</span>
<span class="t" style="left:725.5px;top:309.7px;font-size:17.5px;transform:scaleX(0.891);">Write</span>
<span class="t" style="left:725.5px;top:347.6px;font-size:17.5px;transform:scaleX(0.896);">Short stroke</span>
<span class="t" style="left:705.2px;top:382.5px;font-size:17.5px;color:#8c8c8c;transform:scaleX(0.950);">40</span>
<span class="t" style="left:809.5px;top:382.5px;font-size:17.5px;transform:scaleX(0.958);">gB</span>
<span class="t" style="left:725.5px;top:420.6px;font-size:17.5px;transform:scaleX(0.889);">Transfer rate</span>
<span class="t" style="left:701.2px;top:448.3px;font-size:17.5px;transform:scaleX(0.851);">Minimum</span>
<span class="t" style="left:701.2px;top:497.5px;font-size:17.5px;transform:scaleX(0.854);">Maximum</span>
<span class="t" style="left:701.2px;top:543.3px;font-size:17.5px;transform:scaleX(0.906);">Average</span>
<span class="t" style="left:725.4px;top:609.1px;font-size:17.5px;transform:scaleX(0.896);">Access time</span>
<span class="t" style="left:725.4px;top:659.7px;font-size:17.5px;transform:scaleX(0.871);">Burst rate</span>
<span class="t" style="left:700.2px;top:709.4px;font-size:17.5px;transform:scaleX(0.905);">CPU usage</span>
<span class="t" style="left:720.6px;top:472.2px;font-size:18.5px;font-weight:bold;color:#1fb4f4;transform:scaleX(1.039);">374.6 MB/s</span>
<span class="t" style="left:717.0px;top:519.8px;font-size:18.5px;font-weight:bold;color:#1fb4f4;transform:scaleX(1.027);">1507.4 MB/s</span>
<span class="t" style="left:717.0px;top:566.4px;font-size:18.5px;font-weight:bold;color:#1fb4f4;transform:scaleX(1.027);">1423.5 MB/s</span>
<span class="t" style="left:733.4px;top:632.9px;font-size:18.5px;font-weight:bold;color:#f4f41c;transform:scaleX(0.971);">0.037 ms</span>
<span class="t" style="left:720.9px;top:683.0px;font-size:18.5px;font-weight:bold;color:#fff;transform:scaleX(1.038);">340.5 MB/s</span>
<span class="t" style="left:750.7px;top:733.0px;font-size:18.5px;font-weight:bold;color:#fff;transform:scaleX(0.984);">2.7%</span>
<!-- window borders -->
<div class="a" style="left:1px;top:47px;width:1px;height:725px;background:rgba(255,250,245,.5)"></div>
<div class="a" style="left:867px;top:47px;width:1px;height:725px;background:rgba(255,255,255,.45)"></div>
<div class="a" style="left:1px;top:143px;width:867px;height:1px;background:#1c1c1c"></div>
<div class="a" style="left:1px;top:144px;width:867px;height:1px;background:#5c5c5c"></div>
<div class="a" style="left:0;top:0;width:1px;height:772px;background:#409efe"></div>
<div class="a" style="left:868px;top:0;width:1px;height:772px;background:#409efe"></div>
</body></html>
